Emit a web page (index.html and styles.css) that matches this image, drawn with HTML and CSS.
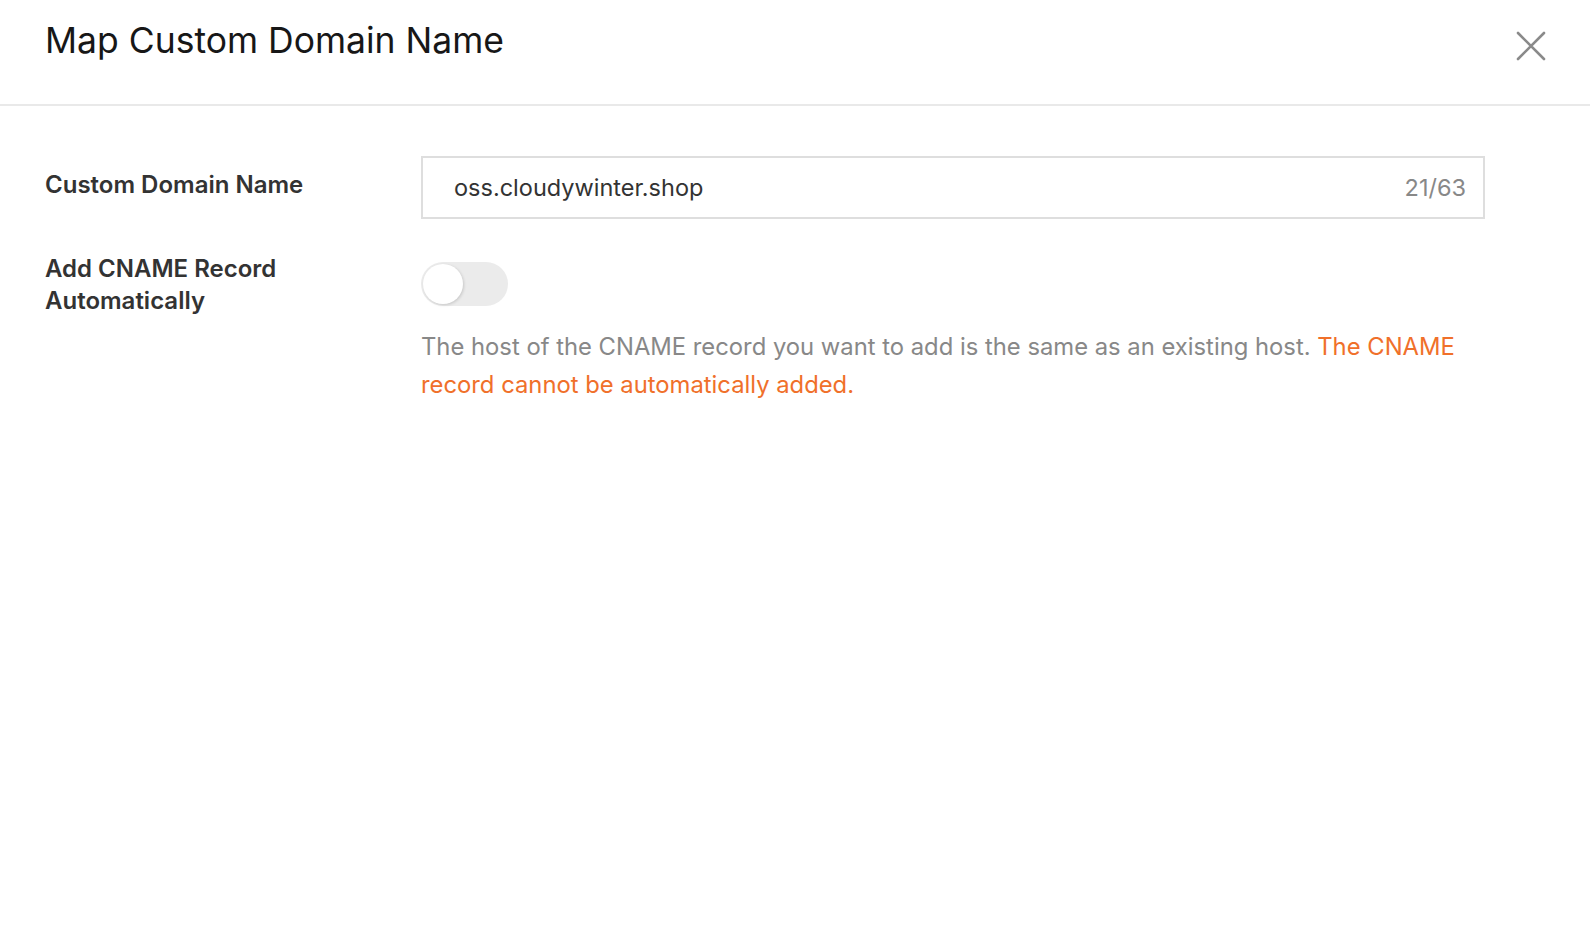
FILE: index.html
```html
<!DOCTYPE html>
<html>
<head>
    <title>Map Custom Domain Name</title>

    <link rel="stylesheet" href="styles.css">
</head>
<body>
    <div class="dialog">
        <div class="dialog-header">
            <h2 class="dialog-title">Map Custom Domain Name</h2>
            <button class="close-btn" aria-label="Close">
                <svg width="30" height="30" viewBox="0 0 30 30">
                    <path d="M2 2 L28 28 M28 2 L2 28" stroke="#8a8a8a" stroke-width="2.6" stroke-linecap="round" fill="none" />
                </svg>
            </button>
        </div>

        <div class="dialog-body">
            <div class="form-row">
                <label class="form-label">Custom Domain Name</label>
                <div class="form-control">
                    <div class="input-box">
                        <input class="text-input" type="text" value="oss.cloudywinter.shop" maxlength="63">
                        <span class="counter">21/63</span>
                    </div>
                </div>
            </div>

            <div class="form-row">
                <label class="form-label label-multi">Add CNAME Record Automatically</label>
                <div class="form-control">
                    <div class="switch"><span class="switch-knob"></span></div>
                    <p class="help-text">The host of the CNAME record you want to add is the same as an existing host. <span class="warn">The CNAME record cannot be automatically added.</span></p>
                </div>
            </div>
        </div>
    </div>
</body>
</html>
```

FILE: styles.css
```css
body {
    margin: 0;
    background-color: #ffffff;
    font-family: Inter, "Noto Sans", sans-serif;
    color: #333333;
}

.dialog {
    width: 100%;
}

.dialog-header {
    display: flex;
    align-items: flex-start;
    justify-content: space-between;
    height: 106px;
    padding: 0 44px 0 45px;
    border-bottom: 2px solid #e9e9e9;
    box-sizing: border-box;
}

.dialog-title {
    margin: 0;
    padding-top: 19px;
    font-size: 35.5px;
    font-weight: 400;
    line-height: 44px;
    color: #171717;
}

.close-btn {
    margin-top: 31px;
    padding: 0;
    border: none;
    background: none;
    cursor: pointer;
    line-height: 0;
}

.dialog-body {
    padding: 50px 45px 0 45px;
}

.form-row {
    display: grid;
    grid-template-columns: 376px 1064px;
    margin-bottom: 43px;
}

.form-label {
    font-size: 24px;
    font-weight: 600;
    line-height: 32px;
    color: #333333;
    padding-top: 13px;
}

.label-multi {
    padding-top: 0;
    margin-top: -9px;
    width: 280px;
}

.input-box {
    display: flex;
    align-items: center;
    height: 63px;
    border: 2px solid #dedede;
    box-sizing: border-box;
    padding: 0 17px 0 31px;
}

.text-input {
    flex: 1;
    border: none;
    outline: none;
    padding: 0;
    font-family: Inter, "Noto Sans", sans-serif;
    font-size: 23.5px;
    color: #333333;
    background: transparent;
}

.counter {
    font-size: 23.5px;
    color: #888888;
}

.switch {
    position: relative;
    width: 87px;
    height: 44px;
    border-radius: 22px;
    background-color: #ebebeb;
}

.switch-knob {
    position: absolute;
    top: 2px;
    left: 2px;
    width: 40px;
    height: 40px;
    border-radius: 50%;
    background-color: #ffffff;
    box-shadow: 1px 1px 3px rgba(0, 0, 0, 0.15);
}

.help-text {
    margin: 22px 0 0 0;
    font-size: 23.8px;
    line-height: 38px;
    color: #888888;
}

.warn {
    color: #f0702a;
}
```
